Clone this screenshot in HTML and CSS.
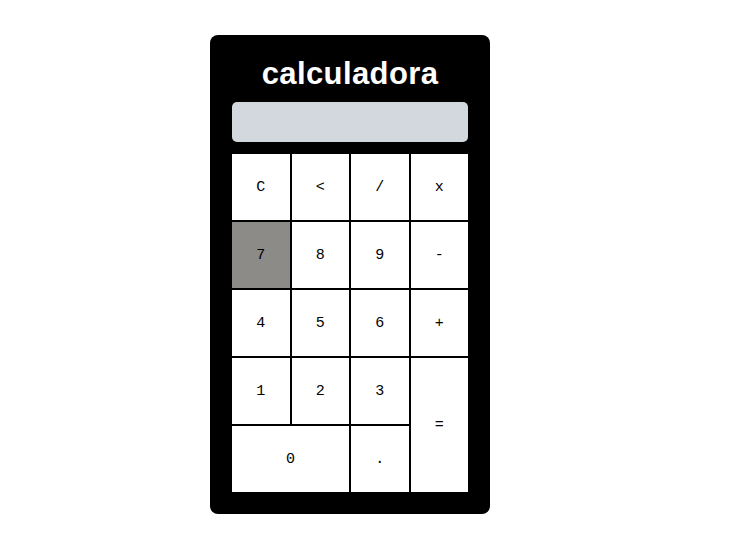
FILE: index.html
```html
<!DOCTYPE html>
<html lang="pt">
<head>
<meta charset="utf-8">
<title>calculadora</title>
<link rel="stylesheet" href="styles.css">
</head>
<body>
<div class="calc">
  <h1 class="title">calculadora</h1>
  <div class="display"></div>
  <div class="keys">
    <button class="key">C</button>
    <button class="key">&lt;</button>
    <button class="key">/</button>
    <button class="key">x</button>
    <button class="key key-active">7</button>
    <button class="key">8</button>
    <button class="key">9</button>
    <button class="key">-</button>
    <button class="key">4</button>
    <button class="key">5</button>
    <button class="key">6</button>
    <button class="key">+</button>
    <button class="key">1</button>
    <button class="key">2</button>
    <button class="key">3</button>
    <button class="key key-equals">=</button>
    <button class="key key-zero">0</button>
    <button class="key">.</button>
  </div>
</div>
</body>
</html>
```
FILE: styles.css
```css
html, body {
  margin: 0;
  padding: 0;
  background: #ffffff;
}

body {
  padding: 35px 0 0 210px;
}

.calc {
  width: 236px;
  padding: 20px 22px 22px;
  background: #000000;
  border-radius: 8px;
}

.title {
  margin: 0 0 10px;
  color: #ffffff;
  font-family: "Liberation Sans", Arial, sans-serif;
  font-weight: bold;
  font-size: 31px;
  letter-spacing: 0.4px;
  text-align: center;
  line-height: 37px;
}

.display {
  height: 40px;
  background: #d3d8de;
  border-radius: 5px;
  margin-bottom: 12px;
}

.keys {
  display: grid;
  grid-template-columns: repeat(4, 1fr);
  grid-template-rows: repeat(5, 66px);
  gap: 2px;
}

.key {
  border: none;
  margin: 0;
  padding: 0;
  background: #ffffff;
  color: #000000;
  font-family: "Liberation Mono", "Courier New", monospace;
  font-size: 15px;
  cursor: pointer;
}

.key-active {
  background: #8c8b88;
}

.key-equals {
  grid-column: 4;
  grid-row: 4 / span 2;
}

.key-zero {
  grid-column: 1 / span 2;
}
```
